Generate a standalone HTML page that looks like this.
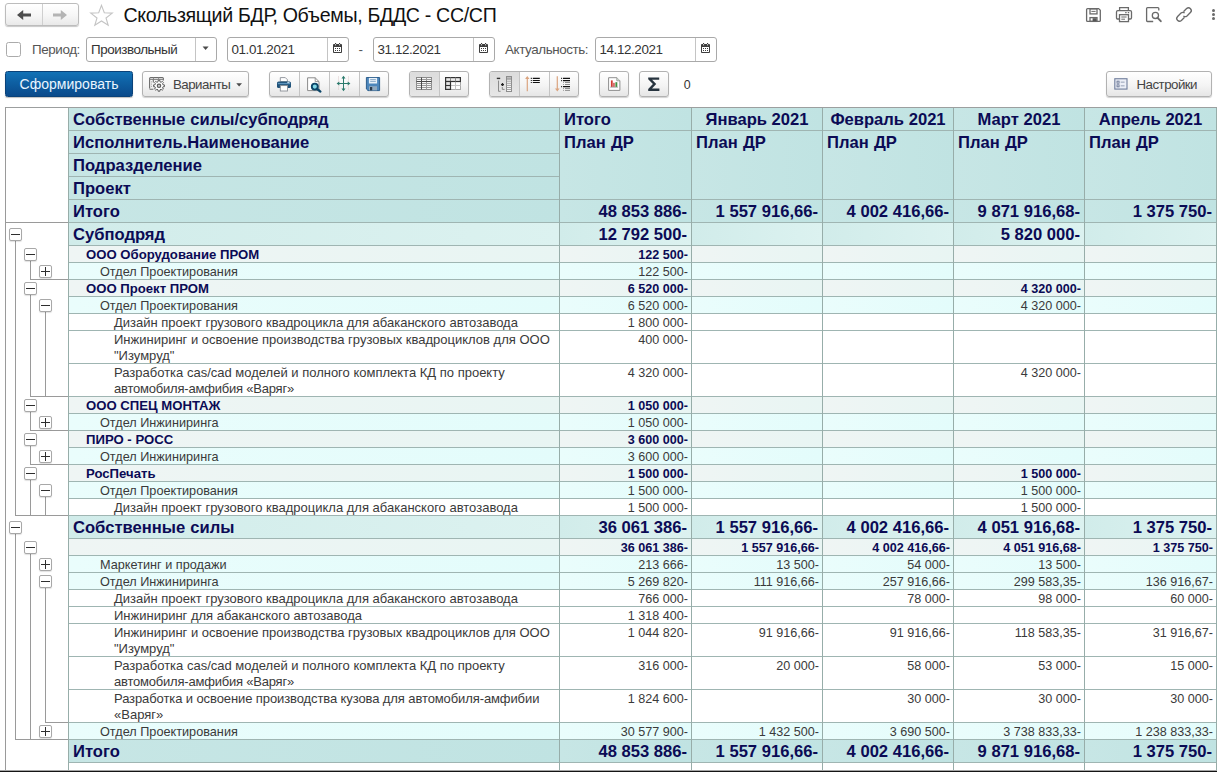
<!DOCTYPE html>
<html><head><meta charset="utf-8"><title>report</title>
<style>
html,body{margin:0;padding:0;background:#fff;}
body{width:1217px;height:772px;position:relative;overflow:hidden;font-family:"Liberation Sans",sans-serif;color:#333;}
.abs{position:absolute;}
.cell{position:absolute;box-sizing:border-box;overflow:hidden;white-space:nowrap;}
.big{font-size:16.6px;font-weight:700;color:#0b0b55;line-height:24px;word-spacing:.6px;}
.sm{font-size:13px;line-height:16px;color:#3a3a3a;padding-top:1px;}
.l3{font-size:12.7px;}
.smb{font-size:13.15px;line-height:16px;font-weight:700;color:#0b0b55;padding-top:1px;}
.num{text-align:right;padding-right:3px;}
.sm.num,.smb.num{font-size:12.6px;}
.big.num{word-spacing:0;padding-right:4px;}
.hd{word-spacing:0;}
.hl{position:absolute;height:1px;background:#9fb5b2;}
.vl{position:absolute;width:1px;background:#97ada9;}
.tl{position:absolute;background:#9a9a9a;}
.tb{position:absolute;width:11px;height:11px;border:1px solid #a8a8a8;border-radius:2px;background:#fff;box-shadow:0 1px 1px rgba(0,0,0,.12);box-sizing:content-box;}
.tb i{position:absolute;left:1px;top:5px;width:9px;height:1px;background:#2e2e2e;}
.tb b{position:absolute;left:5px;top:1px;width:1px;height:9px;background:#2e2e2e;}
.fld{position:absolute;box-sizing:border-box;height:25px;top:37px;border:1px solid #a9a9a9;border-radius:3px;background:#fff;font-size:13.4px;letter-spacing:-.44px;line-height:23px;color:#333;}
.fld .dv{position:absolute;top:0;bottom:0;width:1px;background:#c4c4c4;}
.lbl{position:absolute;font-size:13.4px;letter-spacing:-.4px;line-height:23px;top:38px;color:#555;white-space:nowrap;}
.btn{position:absolute;box-sizing:border-box;top:71px;height:26px;border:1px solid #b2b2b2;border-radius:3px;background:linear-gradient(#ffffff,#f4f4f4 55%,#e6e6e6);box-shadow:0 1px 1px rgba(0,0,0,.18);font-size:13.3px;letter-spacing:-.52px;color:#444;}
.btn .dv{position:absolute;top:0;bottom:0;width:1px;background:#c4c4c4;}
.btn .pr{position:absolute;top:0;bottom:0;background:linear-gradient(#dcdcdc,#e6e6e6);}
svg{position:absolute;overflow:visible;}
.btn svg{margin-left:-1px;}
.btn span{margin-top:1px;}
</style></head><body>

<!-- ===== title bar ===== -->
<div class="abs" style="left:5px;top:3px;width:74px;height:23px;box-sizing:border-box;border:1px solid #bcbcbc;border-radius:3px;background:linear-gradient(#fff,#f6f6f6 55%,#e9e9e9);box-shadow:0 1px 1px rgba(0,0,0,.22)"></div>
<div class="abs" style="left:42px;top:4px;width:1px;height:21px;background:#cfcfcf"></div>
<svg style="left:16px;top:9px" width="16" height="12" viewBox="0 0 16 12"><path d="M1 6 L7.2 1 L7.2 4.4 L15 4.4 L15 7.6 L7.2 7.6 L7.2 11 Z" fill="#4d4d4d"/></svg>
<svg style="left:52px;top:9px" width="16" height="12" viewBox="0 0 16 12"><path d="M15 6 L8.8 1 L8.8 4.4 L1 4.4 L1 7.6 L8.8 7.6 L8.8 11 Z" fill="#b4b4b4"/></svg>
<svg style="left:89px;top:4px" width="25" height="23" viewBox="0 0 25 23"><path d="M12.5 1.4 L15.3 8.8 L23.3 9.1 L17 14 L19.2 21.3 L12.5 17 L5.8 21.3 L8 14 L1.7 9.1 L9.7 8.8 Z" fill="#fff" stroke="#c4c4c4" stroke-width="1.1" stroke-linejoin="miter"/></svg>
<div class="abs" style="left:123.5px;top:2px;font-size:19.6px;letter-spacing:-.33px;line-height:27px;color:#111;white-space:nowrap">Скользящий БДР, Объемы, БДДС - СС/СП</div>

<!-- top-right icons -->
<svg style="left:1085px;top:7px" width="17" height="16" viewBox="0 0 17 16" fill="none" stroke="#6a6a6a" stroke-width="1.3">
 <path d="M2.6 1.6 H13.6 L15.3 3.3 V13.4 Q15.3 14.4 14.3 14.4 H2.6 Q1.6 14.4 1.6 13.4 V2.6 Q1.6 1.6 2.6 1.6 Z"/>
 <rect x="5" y="1.9" width="7" height="5"/><path d="M6.4 4.4 H10.6" stroke-width="1"/>
 <rect x="5" y="10.6" width="7" height="3.8"/><rect x="7.6" y="11.2" width="4" height="3" fill="#555" stroke="none"/>
</svg>
<svg style="left:1115px;top:6px" width="18" height="17" viewBox="0 0 18 17" fill="none" stroke="#6a6a6a" stroke-width="1.3">
 <path d="M4.6 4.6 V1.7 H13.4 V4.6"/>
 <path d="M4.4 13 H2.8 Q1.5 13 1.5 11.7 V6 Q1.5 4.7 2.8 4.7 H15.2 Q16.5 4.7 16.5 6 V11.7 Q16.5 13 15.2 13 H13.6"/>
 <rect x="4.5" y="8.7" width="9" height="6.9"/>
 <path d="M6.3 11 H11.6 M6.3 13.2 H10" stroke-width="1"/>
 <path d="M10.2 6.6 H11.6 M12.8 6.6 H14.2" stroke-width="1.1"/>
</svg>
<svg style="left:1145px;top:6px" width="18" height="17" viewBox="0 0 18 17" fill="none" stroke="#6a6a6a" stroke-width="1.3">
 <path d="M13.8 4.6 V2.6 Q13.8 1.7 12.9 1.7 H2.5 Q1.6 1.7 1.6 2.6 V14.6 Q1.6 15.5 2.5 15.5 H8.2"/>
 <circle cx="10.4" cy="9.4" r="3.1"/>
 <path d="M12.6 11.8 L15.8 15.2" stroke-width="1.9" stroke-linecap="round"/>
</svg>
<svg style="left:1175px;top:6px" width="18" height="17" viewBox="0 0 18 17" fill="none" stroke="#6a6a6a" stroke-width="1.35" stroke-linecap="round">
 <path d="M8.9 5.2 L11.6 2.6 Q13.6 0.8 15.5 2.7 Q17.3 4.7 15.4 6.6 L12 9.9 Q10.4 11.2 8.9 10.3"/>
 <path d="M9.1 11.8 L6.4 14.4 Q4.4 16.2 2.5 14.3 Q0.7 12.3 2.6 10.4 L6 7.1 Q7.6 5.8 9.1 6.7"/>
</svg>
<div class="abs" style="left:1212px;top:9.4px;width:3px;height:3px;border-radius:50%;background:#6a6a6a"></div>
<div class="abs" style="left:1212px;top:13.2px;width:3px;height:3px;border-radius:50%;background:#6a6a6a"></div>
<div class="abs" style="left:1212px;top:17px;width:3px;height:3px;border-radius:50%;background:#6a6a6a"></div>

<!-- ===== row 2: fields ===== -->
<div class="abs" style="left:6px;top:42px;width:15px;height:15px;box-sizing:border-box;border:1px solid #ababab;border-radius:2.5px;background:#fff"></div>
<div class="lbl" style="left:32px">Период:</div>
<div class="fld" style="left:86px;width:131px"><span style="position:absolute;left:4px">Произвольный</span><div class="dv" style="left:108px"></div>
 <svg style="left:115px;top:8px" width="8" height="5" viewBox="0 0 8 5"><path d="M0.6 0.6 H6.6 L3.6 4 Z" fill="#4a4a4a"/></svg></div>
<div class="fld" style="left:227px;width:122px"><span style="position:absolute;left:3.5px;letter-spacing:-.4px">01.01.2021</span><div class="dv" style="left:99px"></div><svg style="left:105px;top:5px" width="9" height="10" viewBox="0 0 9 10" shape-rendering="auto"><rect x="0" y="1" width="9" height="9" rx=".9" fill="#3e3e3e"/><rect x="1" y="4" width="7" height="5" fill="#fff"/><rect x="2" y="0" width="1.1" height="1.2" fill="#3e3e3e"/><rect x="6" y="0" width="1.1" height="1.2" fill="#3e3e3e"/><rect x="2" y="1.3" width="1.1" height="1" fill="#fff"/><rect x="6" y="1.3" width="1.1" height="1" fill="#fff"/><path d="M2 5.5 H3 M4 5.5 H5 M6 5.5 H7 M2 7.5 H3 M4 7.5 H5 M6 7.5 H7" stroke="#3e3e3e" stroke-width="1"/></svg></div>
<div class="lbl" style="left:358.5px">-</div>
<div class="fld" style="left:373px;width:122px"><span style="position:absolute;left:3.5px;letter-spacing:-.4px">31.12.2021</span><div class="dv" style="left:99px"></div><svg style="left:105px;top:5px" width="9" height="10" viewBox="0 0 9 10" shape-rendering="auto"><rect x="0" y="1" width="9" height="9" rx=".9" fill="#3e3e3e"/><rect x="1" y="4" width="7" height="5" fill="#fff"/><rect x="2" y="0" width="1.1" height="1.2" fill="#3e3e3e"/><rect x="6" y="0" width="1.1" height="1.2" fill="#3e3e3e"/><rect x="2" y="1.3" width="1.1" height="1" fill="#fff"/><rect x="6" y="1.3" width="1.1" height="1" fill="#fff"/><path d="M2 5.5 H3 M4 5.5 H5 M6 5.5 H7 M2 7.5 H3 M4 7.5 H5 M6 7.5 H7" stroke="#3e3e3e" stroke-width="1"/></svg></div>
<div class="lbl" style="left:505px">Актуальность:</div>
<div class="fld" style="left:595px;width:122px"><span style="position:absolute;left:3.5px;letter-spacing:-.4px">14.12.2021</span><div class="dv" style="left:99px"></div><svg style="left:105px;top:5px" width="9" height="10" viewBox="0 0 9 10" shape-rendering="auto"><rect x="0" y="1" width="9" height="9" rx=".9" fill="#3e3e3e"/><rect x="1" y="4" width="7" height="5" fill="#fff"/><rect x="2" y="0" width="1.1" height="1.2" fill="#3e3e3e"/><rect x="6" y="0" width="1.1" height="1.2" fill="#3e3e3e"/><rect x="2" y="1.3" width="1.1" height="1" fill="#fff"/><rect x="6" y="1.3" width="1.1" height="1" fill="#fff"/><path d="M2 5.5 H3 M4 5.5 H5 M6 5.5 H7 M2 7.5 H3 M4 7.5 H5 M6 7.5 H7" stroke="#3e3e3e" stroke-width="1"/></svg></div>

<!-- ===== row 3: command bar ===== -->
<div class="abs" style="left:5px;top:71px;width:128px;height:26px;box-sizing:border-box;border:1px solid #0a4279;border-radius:2.5px;background:linear-gradient(#1272b6,#0e5fa2 45%,#0a4a8b);box-shadow:0 1px 1px rgba(0,0,0,.25);color:#eaf5ff;font-size:14px;line-height:24px;text-align:center;white-space:nowrap;letter-spacing:.02px">Сформировать</div>

<div class="btn" style="left:142px;width:107px"><span style="position:absolute;left:30px;top:0;line-height:23px;white-space:nowrap">Варианты</span>
 <svg style="left:94px;top:11px" width="7" height="4" viewBox="0 0 7 4"><path d="M0.3 0.3 H6 L3.15 3.6 Z" fill="#4a4a4a"/></svg>
 <svg style="left:7px;top:5px" width="16" height="15" viewBox="0 0 16 15" fill="none">
  <path d="M0.6 11.6 V1.6 Q0.6 0.6 1.6 0.6 H13.4 Q14.4 0.6 14.4 1.6 V3.4" stroke="#6b6b6b" stroke-width="1.1"/>
  <path d="M0.6 2.5 H14.4 M4.5 .6 V2.5 M9.6 .6 V2.5" stroke="#8a8a8a" stroke-width="1"/>
  <path d="M0.6 12.2 H4.4 M4.3 2.5 V5.6" stroke="#6b6b6b" stroke-width="1.1"/>
  <path d="M2.5 4.4 V11" stroke="#a0a0a0" stroke-width="1" stroke-dasharray="1 1.2"/>
  <path d="M9.01 4.82 L9.10 3.37 L10.90 3.37 L10.99 4.82 L12.11 5.29 L13.20 4.33 L14.47 5.60 L13.51 6.69 L13.98 7.81 L15.43 7.90 L15.43 9.70 L13.98 9.79 L13.51 10.91 L14.47 12.00 L13.20 13.27 L12.11 12.31 L10.99 12.78 L10.90 14.23 L9.10 14.23 L9.01 12.78 L7.89 12.31 L6.80 13.27 L5.53 12.00 L6.49 10.91 L6.02 9.79 L4.57 9.70 L4.57 7.90 L6.02 7.81 L6.49 6.69 L5.53 5.60 L6.80 4.33 L7.89 5.29 Z" fill="#fff" stroke="#5e5e5e" stroke-width="1" stroke-linejoin="round"/>
  <circle cx="10" cy="8.8" r="1.7" fill="#cfcfcf" stroke="#5e5e5e" stroke-width="1.2"/>
 </svg>
</div>

<!-- group 1 -->
<div class="btn" style="left:269px;width:120px">
 <div class="dv" style="left:29px"></div><div class="dv" style="left:59px"></div><div class="dv" style="left:89px"></div>
 <!-- printer -->
 <svg style="left:7px;top:4px" width="16" height="16" viewBox="0 0 16 16">
  <path d="M4.3 5.6 V1.6 H9.3 L11.4 3.7 V5.6 Z" fill="#fff" stroke="#8a8f96" stroke-width=".9"/>
  <rect x="1" y="5.4" width="14" height="6.6" rx="1.6" fill="#1f5279"/>
  <rect x="1.8" y="6.9" width="12.4" height="1.3" fill="#5e94bd"/>
  <rect x="11.3" y="6.1" width="2.2" height="1" fill="#cfe4f2"/>
  <rect x="4.3" y="9.6" width="7.2" height="5.4" fill="#fff" stroke="#8a8f96" stroke-width=".9"/>
 </svg>
 <!-- preview -->
 <svg style="left:37px;top:4px" width="18" height="17" viewBox="0 0 18 17">
  <path d="M1.6 1.8 H9.2 L13 5.6 V14.6 H1.6 Z" fill="#fff" stroke="#8b8b8b" stroke-width="1"/>
  <path d="M9.2 1.8 V5.6 H13" fill="none" stroke="#8b8b8b" stroke-width=".9"/>
  <circle cx="8.8" cy="10.6" r="3" fill="#7fd7e6" stroke="#0c4669" stroke-width="1.9"/>
  <path d="M11.2 13 L14.4 15.6" stroke="#0c4669" stroke-width="2.3" stroke-linecap="round"/>
 </svg>
 <!-- move -->
 <svg style="left:66px;top:3px" width="18" height="18" viewBox="0 0 18 18" fill="none">
  <path d="M3.5 1.5 V15.5 M13.5 1.5 V15.5" stroke="#dccaca" stroke-width="1" stroke-dasharray="1 1"/>
  <path d="M8.5 2.5 V14.5 M3 8.5 H14" stroke="#2b7a6c" stroke-width="1"/>
  <path d="M8.5 .8 L10.5 3.5 H6.5 Z M8.5 16.2 L10.5 13.5 H6.5 Z M1.6 8.5 L4.3 6.5 V10.5 Z M15.4 8.5 L12.7 6.5 V10.5 Z" fill="#2b7a6c"/>
 </svg>
 <!-- save -->
 <svg style="left:96px;top:4px" width="16" height="16" viewBox="0 0 16 16">
  <path d="M1.4 1.5 H14.6 V14.6 H3 L1.4 13 Z" fill="#4c86bb" stroke="#2d5f8e" stroke-width="1"/>
  <rect x="3.9" y="1.9" width="8.2" height="5.6" fill="#eaf2f9"/>
  <path d="M5.2 3.6 H10.8 M5.2 5.4 H10.8" stroke="#7ea2c3" stroke-width=".9"/>
  <rect x="4" y="10.2" width="8" height="4.2" fill="#8fa9bf"/>
  <rect x="5" y="11" width="2.2" height="3.4" fill="#2a3a4c"/>
 </svg>
</div>

<!-- group 2 -->
<div class="btn" style="left:409px;width:60px">
 <div class="pr" style="left:0;width:30px;border-radius:2px 0 0 2px"></div>
 <div class="dv" style="left:29px"></div>
 <svg style="left:7px;top:5px" width="16" height="13" viewBox="0 0 16 13" fill="none">
  <rect x=".5" y=".5" width="15" height="12" fill="#f6f6f6" stroke="#8a8a8a"/>
  <path d="M.5 2.5 H15.5 M.5 6.5 H15.5 M.5 8.5 H15.5 M.5 10.5 H15.5 M10.5 .5 V12.5" stroke="#9a9a9a"/>
  <path d="M.5 4.5 H15.5 M5.5 .5 V12.5" stroke="#4a4a4a"/>
 </svg>
 <svg style="left:36px;top:5px" width="16" height="13" viewBox="0 0 16 13" fill="none">
  <rect x=".5" y=".5" width="15" height="12" fill="#fff" stroke="#a8a8a8"/>
  <path d="M10.5 4.5 V12.5 M5.5 8.5 H15.5" stroke="#c2c2c2"/>
  <rect x=".6" y=".6" width="14.8" height="3.9" fill="#ececec" stroke="#333" stroke-width="1.2"/>
  <path d="M5.5 .6 V4.5 M10.5 .6 V4.5" stroke="#8a8a8a"/>
  <rect x=".6" y="4.5" width="4.9" height="7.9" fill="#e4e4e4" stroke="#333" stroke-width="1.2"/>
  <path d="M.6 8.5 H5.5" stroke="#333" stroke-width="1.1"/>
 </svg>
</div>

<!-- group 3 -->
<div class="btn" style="left:489px;width:90px">
 <div class="pr" style="left:0;width:30px;border-radius:2px 0 0 2px"></div>
 <div class="dv" style="left:29px"></div><div class="dv" style="left:59px"></div>
 <svg style="left:6px;top:3px" width="18" height="18" viewBox="0 0 18 18" fill="none">
  <path d="M1.8 3.4 H5.2" stroke="#333" stroke-width="1.4"/>
  <path d="M3.5 5.6 V16.3 H5.6" stroke="#8a8a8a" stroke-width="1"/>
  <path d="M6 9.6 H9 M7.5 8.1 V11.1" stroke="#222" stroke-width="1.3"/>
  <path d="M7.3 12 V14.4 H9.6" stroke="#8a8a8a" stroke-width="1"/>
  <rect x="11.5" y="1.5" width="5" height="15" fill="#f4f4f4" stroke="#8d8d8d" stroke-width="1"/>
  <rect x="11.5" y="1.5" width="5" height="2.6" fill="#bdbdbd" stroke="#8d8d8d" stroke-width="1"/>
  <path d="M11.5 6.2 H16.5 M11.5 8.3 H16.5 M11.5 10.4 H16.5 M11.5 12.5 H16.5 M11.5 14.5 H16.5" stroke="#9b9b9b" stroke-width=".9"/>
 </svg>
 <svg style="left:35px;top:3px" width="20" height="18" viewBox="0 0 20 18" fill="none">
  <path d="M3.3 2 V16.2" stroke="#dba47f" stroke-width="1.2"/><path d="M3.3 1 L5.5 4 H1.1 Z" fill="#dba47f"/>
  <path d="M8.8 3.4 H15.8 M8.8 5.5 H15.8 M8.8 7.5 H15.8" stroke="#111" stroke-width="1.15"/>
  <path d="M6.8 3.4 H7.8 M6.8 5.5 H7.8 M6.8 7.5 H7.8" stroke="#111" stroke-width="1.15"/>
 </svg>
 <svg style="left:64px;top:3px" width="22" height="18" viewBox="0 0 22 18" fill="none">
  <path d="M4.3 1.2 V15" stroke="#dba47f" stroke-width="1.2"/><path d="M4.3 16.6 L6.6 13.4 H2 Z" fill="#dba47f"/>
  <path d="M10 3.4 H17 M10 5.5 H17 M10 11.5 H17" stroke="#111" stroke-width="1.25"/>
  <path d="M8.2 3.4 H9.1 M8.2 5.5 H9.1 M8.2 11.5 H9.1" stroke="#111" stroke-width="1.25"/>
  <path d="M12 7.5 H17 M12 9.5 H17 M12 13.5 H17 M12 15.4 H17" stroke="#8e8e8e" stroke-width="1"/>
  <path d="M10.2 7.5 H11 M10.2 9.5 H11 M10.2 13.5 H11 M10.2 15.4 H11" stroke="#8e8e8e" stroke-width="1"/>
 </svg>
</div>

<!-- chart -->
<div class="btn" style="left:599px;width:30px">
 <svg style="left:8px;top:4px" width="15" height="16" viewBox="0 0 15 16">
  <path d="M1.6 1.7 H9.8 L12.9 4.8 V14.4 H1.6 Z" fill="#fff" stroke="#8e8e8e" stroke-width="1"/>
  <path d="M9.8 1.7 V4.8 H12.9" fill="#d8e4d8" stroke="#8e8e8e" stroke-width=".8"/>
  <rect x="3.9" y="4.4" width="1.8" height="6.6" fill="#d23a33"/>
  <rect x="6.2" y="6.8" width="1.5" height="4.2" fill="#c9504a"/>
  <rect x="8.4" y="6.2" width="1.9" height="4.8" fill="#3f8f3f"/>
  <path d="M3.2 11.2 H11" stroke="#9c9c9c" stroke-width=".8"/>
 </svg>
</div>
<!-- sigma -->
<div class="btn" style="left:639px;width:30px">
 <svg style="left:8px;top:4px" width="14" height="16" viewBox="0 0 14 16"><path d="M1.2 1.4 H12.2 V3.7 H5.1 L9.2 7.9 L5 12.5 H12.4 V14.9 H1.2 V13.1 L5.9 7.9 L1.2 3.2 Z" fill="#27343f"/></svg>
</div>
<div class="abs" style="left:683.7px;top:73px;font-size:12.4px;line-height:25px;color:#333">0</div>

<!-- settings -->
<div class="btn" style="left:1106px;width:106px"><span style="position:absolute;left:29.5px;top:0;line-height:23px;white-space:nowrap">Настройки</span>
 <svg style="left:8px;top:6px" width="14" height="12" viewBox="0 0 15 13" fill="none">
  <rect x=".8" y=".8" width="13.2" height="11.2" fill="#eceff7" stroke="#6f7d9c" stroke-width="1.2"/>
  <rect x="3.2" y="3.4" width="2.2" height="2.2" fill="#fff" stroke="#5d6b8c" stroke-width=".9"/>
  <rect x="3.2" y="7.4" width="2.2" height="2.2" fill="#fff" stroke="#5d6b8c" stroke-width=".9"/>
  <path d="M7.2 4.5 H11.4 M7.2 8.5 H11.4" stroke="#8f9ab2" stroke-width="1"/>
 </svg>
</div>

<div class="cell big" style="left:69px;top:108px;width:490px;height:22px;background:linear-gradient(90deg,#c7e6e5,#c0e3e2);padding-left:4px">Собственные силы/субподряд</div>
<div class="cell big" style="left:69px;top:131px;width:490px;height:22px;background:linear-gradient(90deg,#c7e6e5,#c0e3e2);padding-left:4px">Исполнитель.Наименование</div>
<div class="cell big" style="left:69px;top:154px;width:490px;height:22px;background:linear-gradient(90deg,#c7e6e5,#c0e3e2);padding-left:4px">Подразделение</div>
<div class="cell big" style="left:69px;top:177px;width:490px;height:22px;background:linear-gradient(90deg,#c7e6e5,#c0e3e2);padding-left:4px">Проект</div>
<div class="cell big" style="left:69px;top:200px;width:490px;height:22px;background:linear-gradient(90deg,#c7e6e5,#c0e3e2);padding-left:4px">Итого</div>
<div class="cell big num" style="left:560px;top:200px;width:131px;height:22px;background:linear-gradient(90deg,#c7e6e5,#c0e3e2)">48 853 886-</div>
<div class="cell big num" style="left:692px;top:200px;width:130px;height:22px;background:linear-gradient(90deg,#c7e6e5,#c0e3e2)">1 557 916,66-</div>
<div class="cell big num" style="left:823px;top:200px;width:130px;height:22px;background:linear-gradient(90deg,#c7e6e5,#c0e3e2)">4 002 416,66-</div>
<div class="cell big num" style="left:954px;top:200px;width:130px;height:22px;background:linear-gradient(90deg,#c7e6e5,#c0e3e2)">9 871 916,68-</div>
<div class="cell big num" style="left:1085px;top:200px;width:131px;height:22px;background:linear-gradient(90deg,#c7e6e5,#c0e3e2)">1 375 750-</div>
<div class="cell big" style="left:69px;top:223px;width:490px;height:22px;background:linear-gradient(90deg,#d1ecea,#dcf2f0);padding-left:4px">Субподряд</div>
<div class="cell big num" style="left:560px;top:223px;width:131px;height:22px;background:linear-gradient(90deg,#d1ecea,#dcf2f0)">12 792 500-</div>
<div class="cell big num" style="left:692px;top:223px;width:130px;height:22px;background:linear-gradient(90deg,#d1ecea,#dcf2f0)"></div>
<div class="cell big num" style="left:823px;top:223px;width:130px;height:22px;background:linear-gradient(90deg,#d1ecea,#dcf2f0)"></div>
<div class="cell big num" style="left:954px;top:223px;width:130px;height:22px;background:linear-gradient(90deg,#d1ecea,#dcf2f0)">5 820 000-</div>
<div class="cell big num" style="left:1085px;top:223px;width:131px;height:22px;background:linear-gradient(90deg,#d1ecea,#dcf2f0)"></div>
<div class="cell smb" style="left:69px;top:246px;width:490px;height:16px;background:linear-gradient(90deg,#eff5f4,#e8f5f3);padding-left:17px">ООО Оборудование ПРОМ</div>
<div class="cell smb num" style="left:560px;top:246px;width:131px;height:16px;background:linear-gradient(90deg,#eff5f4,#e8f5f3)">122 500-</div>
<div class="cell smb num" style="left:692px;top:246px;width:130px;height:16px;background:linear-gradient(90deg,#eff5f4,#e8f5f3)"></div>
<div class="cell smb num" style="left:823px;top:246px;width:130px;height:16px;background:linear-gradient(90deg,#eff5f4,#e8f5f3)"></div>
<div class="cell smb num" style="left:954px;top:246px;width:130px;height:16px;background:linear-gradient(90deg,#eff5f4,#e8f5f3)"></div>
<div class="cell smb num" style="left:1085px;top:246px;width:131px;height:16px;background:linear-gradient(90deg,#eff5f4,#e8f5f3)"></div>
<div class="cell sm l3" style="left:69px;top:263px;width:490px;height:16px;background:linear-gradient(90deg,#eafdfc,#e3fcfb);padding-left:31px">Отдел Проектирования</div>
<div class="cell sm l3 num" style="left:560px;top:263px;width:131px;height:16px;background:linear-gradient(90deg,#eafdfc,#e3fcfb)">122 500-</div>
<div class="cell sm l3 num" style="left:692px;top:263px;width:130px;height:16px;background:linear-gradient(90deg,#eafdfc,#e3fcfb)"></div>
<div class="cell sm l3 num" style="left:823px;top:263px;width:130px;height:16px;background:linear-gradient(90deg,#eafdfc,#e3fcfb)"></div>
<div class="cell sm l3 num" style="left:954px;top:263px;width:130px;height:16px;background:linear-gradient(90deg,#eafdfc,#e3fcfb)"></div>
<div class="cell sm l3 num" style="left:1085px;top:263px;width:131px;height:16px;background:linear-gradient(90deg,#eafdfc,#e3fcfb)"></div>
<div class="cell smb" style="left:69px;top:280px;width:490px;height:16px;background:linear-gradient(90deg,#eff5f4,#e8f5f3);padding-left:17px">ООО Проект ПРОМ</div>
<div class="cell smb num" style="left:560px;top:280px;width:131px;height:16px;background:linear-gradient(90deg,#eff5f4,#e8f5f3)">6 520 000-</div>
<div class="cell smb num" style="left:692px;top:280px;width:130px;height:16px;background:linear-gradient(90deg,#eff5f4,#e8f5f3)"></div>
<div class="cell smb num" style="left:823px;top:280px;width:130px;height:16px;background:linear-gradient(90deg,#eff5f4,#e8f5f3)"></div>
<div class="cell smb num" style="left:954px;top:280px;width:130px;height:16px;background:linear-gradient(90deg,#eff5f4,#e8f5f3)">4 320 000-</div>
<div class="cell smb num" style="left:1085px;top:280px;width:131px;height:16px;background:linear-gradient(90deg,#eff5f4,#e8f5f3)"></div>
<div class="cell sm l3" style="left:69px;top:297px;width:490px;height:16px;background:linear-gradient(90deg,#eafdfc,#e3fcfb);padding-left:31px">Отдел Проектирования</div>
<div class="cell sm l3 num" style="left:560px;top:297px;width:131px;height:16px;background:linear-gradient(90deg,#eafdfc,#e3fcfb)">6 520 000-</div>
<div class="cell sm l3 num" style="left:692px;top:297px;width:130px;height:16px;background:linear-gradient(90deg,#eafdfc,#e3fcfb)"></div>
<div class="cell sm l3 num" style="left:823px;top:297px;width:130px;height:16px;background:linear-gradient(90deg,#eafdfc,#e3fcfb)"></div>
<div class="cell sm l3 num" style="left:954px;top:297px;width:130px;height:16px;background:linear-gradient(90deg,#eafdfc,#e3fcfb)">4 320 000-</div>
<div class="cell sm l3 num" style="left:1085px;top:297px;width:131px;height:16px;background:linear-gradient(90deg,#eafdfc,#e3fcfb)"></div>
<div class="cell sm" style="left:69px;top:314px;width:490px;height:16px;background:#fff;padding-left:45px">Дизайн проект грузового квадроцикла для абаканского автозавода</div>
<div class="cell sm num" style="left:560px;top:314px;width:131px;height:16px;background:#fff">1 800 000-</div>
<div class="cell sm num" style="left:692px;top:314px;width:130px;height:16px;background:#fff"></div>
<div class="cell sm num" style="left:823px;top:314px;width:130px;height:16px;background:#fff"></div>
<div class="cell sm num" style="left:954px;top:314px;width:130px;height:16px;background:#fff"></div>
<div class="cell sm num" style="left:1085px;top:314px;width:131px;height:16px;background:#fff"></div>
<div class="cell sm" style="left:69px;top:331px;width:490px;height:32px;background:#fff;padding-left:45px">Инжиниринг и освоение производства грузовых квадроциклов для ООО<br>"Изумруд"</div>
<div class="cell sm num" style="left:560px;top:331px;width:131px;height:32px;background:#fff">400 000-</div>
<div class="cell sm num" style="left:692px;top:331px;width:130px;height:32px;background:#fff"></div>
<div class="cell sm num" style="left:823px;top:331px;width:130px;height:32px;background:#fff"></div>
<div class="cell sm num" style="left:954px;top:331px;width:130px;height:32px;background:#fff"></div>
<div class="cell sm num" style="left:1085px;top:331px;width:131px;height:32px;background:#fff"></div>
<div class="cell sm" style="left:69px;top:364px;width:490px;height:32px;background:#fff;padding-left:45px">Разработка cas/cad моделей и полного комплекта КД по проекту<br><span style="letter-spacing:-.21px">автомобиля-амфибия «Варяг»</span></div>
<div class="cell sm num" style="left:560px;top:364px;width:131px;height:32px;background:#fff">4 320 000-</div>
<div class="cell sm num" style="left:692px;top:364px;width:130px;height:32px;background:#fff"></div>
<div class="cell sm num" style="left:823px;top:364px;width:130px;height:32px;background:#fff"></div>
<div class="cell sm num" style="left:954px;top:364px;width:130px;height:32px;background:#fff">4 320 000-</div>
<div class="cell sm num" style="left:1085px;top:364px;width:131px;height:32px;background:#fff"></div>
<div class="cell smb" style="left:69px;top:397px;width:490px;height:16px;background:linear-gradient(90deg,#eff5f4,#e8f5f3);padding-left:17px">ООО СПЕЦ МОНТАЖ</div>
<div class="cell smb num" style="left:560px;top:397px;width:131px;height:16px;background:linear-gradient(90deg,#eff5f4,#e8f5f3)">1 050 000-</div>
<div class="cell smb num" style="left:692px;top:397px;width:130px;height:16px;background:linear-gradient(90deg,#eff5f4,#e8f5f3)"></div>
<div class="cell smb num" style="left:823px;top:397px;width:130px;height:16px;background:linear-gradient(90deg,#eff5f4,#e8f5f3)"></div>
<div class="cell smb num" style="left:954px;top:397px;width:130px;height:16px;background:linear-gradient(90deg,#eff5f4,#e8f5f3)"></div>
<div class="cell smb num" style="left:1085px;top:397px;width:131px;height:16px;background:linear-gradient(90deg,#eff5f4,#e8f5f3)"></div>
<div class="cell sm l3" style="left:69px;top:414px;width:490px;height:16px;background:linear-gradient(90deg,#eafdfc,#e3fcfb);padding-left:31px">Отдел Инжиниринга</div>
<div class="cell sm l3 num" style="left:560px;top:414px;width:131px;height:16px;background:linear-gradient(90deg,#eafdfc,#e3fcfb)">1 050 000-</div>
<div class="cell sm l3 num" style="left:692px;top:414px;width:130px;height:16px;background:linear-gradient(90deg,#eafdfc,#e3fcfb)"></div>
<div class="cell sm l3 num" style="left:823px;top:414px;width:130px;height:16px;background:linear-gradient(90deg,#eafdfc,#e3fcfb)"></div>
<div class="cell sm l3 num" style="left:954px;top:414px;width:130px;height:16px;background:linear-gradient(90deg,#eafdfc,#e3fcfb)"></div>
<div class="cell sm l3 num" style="left:1085px;top:414px;width:131px;height:16px;background:linear-gradient(90deg,#eafdfc,#e3fcfb)"></div>
<div class="cell smb" style="left:69px;top:431px;width:490px;height:16px;background:linear-gradient(90deg,#eff5f4,#e8f5f3);padding-left:17px">ПИРО - РОСС</div>
<div class="cell smb num" style="left:560px;top:431px;width:131px;height:16px;background:linear-gradient(90deg,#eff5f4,#e8f5f3)">3 600 000-</div>
<div class="cell smb num" style="left:692px;top:431px;width:130px;height:16px;background:linear-gradient(90deg,#eff5f4,#e8f5f3)"></div>
<div class="cell smb num" style="left:823px;top:431px;width:130px;height:16px;background:linear-gradient(90deg,#eff5f4,#e8f5f3)"></div>
<div class="cell smb num" style="left:954px;top:431px;width:130px;height:16px;background:linear-gradient(90deg,#eff5f4,#e8f5f3)"></div>
<div class="cell smb num" style="left:1085px;top:431px;width:131px;height:16px;background:linear-gradient(90deg,#eff5f4,#e8f5f3)"></div>
<div class="cell sm l3" style="left:69px;top:448px;width:490px;height:16px;background:linear-gradient(90deg,#eafdfc,#e3fcfb);padding-left:31px">Отдел Инжиниринга</div>
<div class="cell sm l3 num" style="left:560px;top:448px;width:131px;height:16px;background:linear-gradient(90deg,#eafdfc,#e3fcfb)">3 600 000-</div>
<div class="cell sm l3 num" style="left:692px;top:448px;width:130px;height:16px;background:linear-gradient(90deg,#eafdfc,#e3fcfb)"></div>
<div class="cell sm l3 num" style="left:823px;top:448px;width:130px;height:16px;background:linear-gradient(90deg,#eafdfc,#e3fcfb)"></div>
<div class="cell sm l3 num" style="left:954px;top:448px;width:130px;height:16px;background:linear-gradient(90deg,#eafdfc,#e3fcfb)"></div>
<div class="cell sm l3 num" style="left:1085px;top:448px;width:131px;height:16px;background:linear-gradient(90deg,#eafdfc,#e3fcfb)"></div>
<div class="cell smb" style="left:69px;top:465px;width:490px;height:16px;background:linear-gradient(90deg,#eff5f4,#e8f5f3);padding-left:17px">РосПечать</div>
<div class="cell smb num" style="left:560px;top:465px;width:131px;height:16px;background:linear-gradient(90deg,#eff5f4,#e8f5f3)">1 500 000-</div>
<div class="cell smb num" style="left:692px;top:465px;width:130px;height:16px;background:linear-gradient(90deg,#eff5f4,#e8f5f3)"></div>
<div class="cell smb num" style="left:823px;top:465px;width:130px;height:16px;background:linear-gradient(90deg,#eff5f4,#e8f5f3)"></div>
<div class="cell smb num" style="left:954px;top:465px;width:130px;height:16px;background:linear-gradient(90deg,#eff5f4,#e8f5f3)">1 500 000-</div>
<div class="cell smb num" style="left:1085px;top:465px;width:131px;height:16px;background:linear-gradient(90deg,#eff5f4,#e8f5f3)"></div>
<div class="cell sm l3" style="left:69px;top:482px;width:490px;height:16px;background:linear-gradient(90deg,#eafdfc,#e3fcfb);padding-left:31px">Отдел Проектирования</div>
<div class="cell sm l3 num" style="left:560px;top:482px;width:131px;height:16px;background:linear-gradient(90deg,#eafdfc,#e3fcfb)">1 500 000-</div>
<div class="cell sm l3 num" style="left:692px;top:482px;width:130px;height:16px;background:linear-gradient(90deg,#eafdfc,#e3fcfb)"></div>
<div class="cell sm l3 num" style="left:823px;top:482px;width:130px;height:16px;background:linear-gradient(90deg,#eafdfc,#e3fcfb)"></div>
<div class="cell sm l3 num" style="left:954px;top:482px;width:130px;height:16px;background:linear-gradient(90deg,#eafdfc,#e3fcfb)">1 500 000-</div>
<div class="cell sm l3 num" style="left:1085px;top:482px;width:131px;height:16px;background:linear-gradient(90deg,#eafdfc,#e3fcfb)"></div>
<div class="cell sm" style="left:69px;top:499px;width:490px;height:16px;background:#fff;padding-left:45px">Дизайн проект грузового квадроцикла для абаканского автозавода</div>
<div class="cell sm num" style="left:560px;top:499px;width:131px;height:16px;background:#fff">1 500 000-</div>
<div class="cell sm num" style="left:692px;top:499px;width:130px;height:16px;background:#fff"></div>
<div class="cell sm num" style="left:823px;top:499px;width:130px;height:16px;background:#fff"></div>
<div class="cell sm num" style="left:954px;top:499px;width:130px;height:16px;background:#fff">1 500 000-</div>
<div class="cell sm num" style="left:1085px;top:499px;width:131px;height:16px;background:#fff"></div>
<div class="cell big" style="left:69px;top:516px;width:490px;height:22px;background:linear-gradient(90deg,#d1ecea,#dcf2f0);padding-left:4px">Собственные силы</div>
<div class="cell big num" style="left:560px;top:516px;width:131px;height:22px;background:linear-gradient(90deg,#d1ecea,#dcf2f0)">36 061 386-</div>
<div class="cell big num" style="left:692px;top:516px;width:130px;height:22px;background:linear-gradient(90deg,#d1ecea,#dcf2f0)">1 557 916,66-</div>
<div class="cell big num" style="left:823px;top:516px;width:130px;height:22px;background:linear-gradient(90deg,#d1ecea,#dcf2f0)">4 002 416,66-</div>
<div class="cell big num" style="left:954px;top:516px;width:130px;height:22px;background:linear-gradient(90deg,#d1ecea,#dcf2f0)">4 051 916,68-</div>
<div class="cell big num" style="left:1085px;top:516px;width:131px;height:22px;background:linear-gradient(90deg,#d1ecea,#dcf2f0)">1 375 750-</div>
<div class="cell smb" style="left:69px;top:539px;width:490px;height:16px;background:linear-gradient(90deg,#eff5f4,#e8f5f3);padding-left:17px"></div>
<div class="cell smb num" style="left:560px;top:539px;width:131px;height:16px;background:linear-gradient(90deg,#eff5f4,#e8f5f3)">36 061 386-</div>
<div class="cell smb num" style="left:692px;top:539px;width:130px;height:16px;background:linear-gradient(90deg,#eff5f4,#e8f5f3)">1 557 916,66-</div>
<div class="cell smb num" style="left:823px;top:539px;width:130px;height:16px;background:linear-gradient(90deg,#eff5f4,#e8f5f3)">4 002 416,66-</div>
<div class="cell smb num" style="left:954px;top:539px;width:130px;height:16px;background:linear-gradient(90deg,#eff5f4,#e8f5f3)">4 051 916,68-</div>
<div class="cell smb num" style="left:1085px;top:539px;width:131px;height:16px;background:linear-gradient(90deg,#eff5f4,#e8f5f3)">1 375 750-</div>
<div class="cell sm l3" style="left:69px;top:556px;width:490px;height:16px;background:linear-gradient(90deg,#eafdfc,#e3fcfb);padding-left:31px">Маркетинг и продажи</div>
<div class="cell sm l3 num" style="left:560px;top:556px;width:131px;height:16px;background:linear-gradient(90deg,#eafdfc,#e3fcfb)">213 666-</div>
<div class="cell sm l3 num" style="left:692px;top:556px;width:130px;height:16px;background:linear-gradient(90deg,#eafdfc,#e3fcfb)">13 500-</div>
<div class="cell sm l3 num" style="left:823px;top:556px;width:130px;height:16px;background:linear-gradient(90deg,#eafdfc,#e3fcfb)">54 000-</div>
<div class="cell sm l3 num" style="left:954px;top:556px;width:130px;height:16px;background:linear-gradient(90deg,#eafdfc,#e3fcfb)">13 500-</div>
<div class="cell sm l3 num" style="left:1085px;top:556px;width:131px;height:16px;background:linear-gradient(90deg,#eafdfc,#e3fcfb)"></div>
<div class="cell sm l3" style="left:69px;top:573px;width:490px;height:16px;background:linear-gradient(90deg,#eafdfc,#e3fcfb);padding-left:31px">Отдел Инжиниринга</div>
<div class="cell sm l3 num" style="left:560px;top:573px;width:131px;height:16px;background:linear-gradient(90deg,#eafdfc,#e3fcfb)">5 269 820-</div>
<div class="cell sm l3 num" style="left:692px;top:573px;width:130px;height:16px;background:linear-gradient(90deg,#eafdfc,#e3fcfb)">111 916,66-</div>
<div class="cell sm l3 num" style="left:823px;top:573px;width:130px;height:16px;background:linear-gradient(90deg,#eafdfc,#e3fcfb)">257 916,66-</div>
<div class="cell sm l3 num" style="left:954px;top:573px;width:130px;height:16px;background:linear-gradient(90deg,#eafdfc,#e3fcfb)">299 583,35-</div>
<div class="cell sm l3 num" style="left:1085px;top:573px;width:131px;height:16px;background:linear-gradient(90deg,#eafdfc,#e3fcfb)">136 916,67-</div>
<div class="cell sm" style="left:69px;top:590px;width:490px;height:16px;background:#fff;padding-left:45px">Дизайн проект грузового квадроцикла для абаканского автозавода</div>
<div class="cell sm num" style="left:560px;top:590px;width:131px;height:16px;background:#fff">766 000-</div>
<div class="cell sm num" style="left:692px;top:590px;width:130px;height:16px;background:#fff"></div>
<div class="cell sm num" style="left:823px;top:590px;width:130px;height:16px;background:#fff">78 000-</div>
<div class="cell sm num" style="left:954px;top:590px;width:130px;height:16px;background:#fff">98 000-</div>
<div class="cell sm num" style="left:1085px;top:590px;width:131px;height:16px;background:#fff">60 000-</div>
<div class="cell sm" style="left:69px;top:607px;width:490px;height:16px;background:#fff;padding-left:45px">Инжиниринг для абаканского автозавода</div>
<div class="cell sm num" style="left:560px;top:607px;width:131px;height:16px;background:#fff">1 318 400-</div>
<div class="cell sm num" style="left:692px;top:607px;width:130px;height:16px;background:#fff"></div>
<div class="cell sm num" style="left:823px;top:607px;width:130px;height:16px;background:#fff"></div>
<div class="cell sm num" style="left:954px;top:607px;width:130px;height:16px;background:#fff"></div>
<div class="cell sm num" style="left:1085px;top:607px;width:131px;height:16px;background:#fff"></div>
<div class="cell sm" style="left:69px;top:624px;width:490px;height:32px;background:#fff;padding-left:45px">Инжиниринг и освоение производства грузовых квадроциклов для ООО<br>"Изумруд"</div>
<div class="cell sm num" style="left:560px;top:624px;width:131px;height:32px;background:#fff">1 044 820-</div>
<div class="cell sm num" style="left:692px;top:624px;width:130px;height:32px;background:#fff">91 916,66-</div>
<div class="cell sm num" style="left:823px;top:624px;width:130px;height:32px;background:#fff">91 916,66-</div>
<div class="cell sm num" style="left:954px;top:624px;width:130px;height:32px;background:#fff">118 583,35-</div>
<div class="cell sm num" style="left:1085px;top:624px;width:131px;height:32px;background:#fff">31 916,67-</div>
<div class="cell sm" style="left:69px;top:657px;width:490px;height:32px;background:#fff;padding-left:45px">Разработка cas/cad моделей и полного комплекта КД по проекту<br><span style="letter-spacing:-.21px">автомобиля-амфибия «Варяг»</span></div>
<div class="cell sm num" style="left:560px;top:657px;width:131px;height:32px;background:#fff">316 000-</div>
<div class="cell sm num" style="left:692px;top:657px;width:130px;height:32px;background:#fff">20 000-</div>
<div class="cell sm num" style="left:823px;top:657px;width:130px;height:32px;background:#fff">58 000-</div>
<div class="cell sm num" style="left:954px;top:657px;width:130px;height:32px;background:#fff">53 000-</div>
<div class="cell sm num" style="left:1085px;top:657px;width:131px;height:32px;background:#fff">15 000-</div>
<div class="cell sm" style="left:69px;top:690px;width:490px;height:32px;background:#fff;padding-left:45px"><span style="letter-spacing:-.1px">Разработка и освоение производства кузова для автомобиля-амфибии</span><br>«Варяг»</div>
<div class="cell sm num" style="left:560px;top:690px;width:131px;height:32px;background:#fff">1 824 600-</div>
<div class="cell sm num" style="left:692px;top:690px;width:130px;height:32px;background:#fff"></div>
<div class="cell sm num" style="left:823px;top:690px;width:130px;height:32px;background:#fff">30 000-</div>
<div class="cell sm num" style="left:954px;top:690px;width:130px;height:32px;background:#fff">30 000-</div>
<div class="cell sm num" style="left:1085px;top:690px;width:131px;height:32px;background:#fff">30 000-</div>
<div class="cell sm l3" style="left:69px;top:723px;width:490px;height:16px;background:linear-gradient(90deg,#eafdfc,#e3fcfb);padding-left:31px">Отдел Проектирования</div>
<div class="cell sm l3 num" style="left:560px;top:723px;width:131px;height:16px;background:linear-gradient(90deg,#eafdfc,#e3fcfb)">30 577 900-</div>
<div class="cell sm l3 num" style="left:692px;top:723px;width:130px;height:16px;background:linear-gradient(90deg,#eafdfc,#e3fcfb)">1 432 500-</div>
<div class="cell sm l3 num" style="left:823px;top:723px;width:130px;height:16px;background:linear-gradient(90deg,#eafdfc,#e3fcfb)">3 690 500-</div>
<div class="cell sm l3 num" style="left:954px;top:723px;width:130px;height:16px;background:linear-gradient(90deg,#eafdfc,#e3fcfb)">3 738 833,33-</div>
<div class="cell sm l3 num" style="left:1085px;top:723px;width:131px;height:16px;background:linear-gradient(90deg,#eafdfc,#e3fcfb)">1 238 833,33-</div>
<div class="cell big" style="left:69px;top:740px;width:490px;height:22px;background:linear-gradient(90deg,#c7e6e5,#c0e3e2);padding-left:4px">Итого</div>
<div class="cell big num" style="left:560px;top:740px;width:131px;height:22px;background:linear-gradient(90deg,#c7e6e5,#c0e3e2)">48 853 886-</div>
<div class="cell big num" style="left:692px;top:740px;width:130px;height:22px;background:linear-gradient(90deg,#c7e6e5,#c0e3e2)">1 557 916,66-</div>
<div class="cell big num" style="left:823px;top:740px;width:130px;height:22px;background:linear-gradient(90deg,#c7e6e5,#c0e3e2)">4 002 416,66-</div>
<div class="cell big num" style="left:954px;top:740px;width:130px;height:22px;background:linear-gradient(90deg,#c7e6e5,#c0e3e2)">9 871 916,68-</div>
<div class="cell big num" style="left:1085px;top:740px;width:131px;height:22px;background:linear-gradient(90deg,#c7e6e5,#c0e3e2)">1 375 750-</div>
<div class="cell sm" style="left:69px;top:763px;width:490px;height:16px;background:#fff;padding-left:45px"></div>
<div class="cell sm num" style="left:560px;top:763px;width:131px;height:16px;background:#fff"></div>
<div class="cell sm num" style="left:692px;top:763px;width:130px;height:16px;background:#fff"></div>
<div class="cell sm num" style="left:823px;top:763px;width:130px;height:16px;background:#fff"></div>
<div class="cell sm num" style="left:954px;top:763px;width:130px;height:16px;background:#fff"></div>
<div class="cell sm num" style="left:1085px;top:763px;width:131px;height:16px;background:#fff"></div>
<div class="cell big hd" style="left:560px;top:108px;width:131px;height:22px;background:linear-gradient(90deg,#c7e6e5,#c0e3e2);text-align:left;padding-left:4px">Итого</div>
<div class="cell big" style="left:560px;top:131px;width:131px;height:68px;background:linear-gradient(90deg,#c7e6e5,#c0e3e2);padding-left:4px">План ДР</div>
<div class="cell big hd" style="left:692px;top:108px;width:130px;height:22px;background:linear-gradient(90deg,#c7e6e5,#c0e3e2);text-align:center">Январь 2021</div>
<div class="cell big" style="left:692px;top:131px;width:130px;height:68px;background:linear-gradient(90deg,#c7e6e5,#c0e3e2);padding-left:4px">План ДР</div>
<div class="cell big hd" style="left:823px;top:108px;width:130px;height:22px;background:linear-gradient(90deg,#c7e6e5,#c0e3e2);text-align:center">Февраль 2021</div>
<div class="cell big" style="left:823px;top:131px;width:130px;height:68px;background:linear-gradient(90deg,#c7e6e5,#c0e3e2);padding-left:4px">План ДР</div>
<div class="cell big hd" style="left:954px;top:108px;width:130px;height:22px;background:linear-gradient(90deg,#c7e6e5,#c0e3e2);text-align:center">Март 2021</div>
<div class="cell big" style="left:954px;top:131px;width:130px;height:68px;background:linear-gradient(90deg,#c7e6e5,#c0e3e2);padding-left:4px">План ДР</div>
<div class="cell big hd" style="left:1085px;top:108px;width:131px;height:22px;background:linear-gradient(90deg,#c7e6e5,#c0e3e2);text-align:center">Апрель 2021</div>
<div class="cell big" style="left:1085px;top:131px;width:131px;height:68px;background:linear-gradient(90deg,#c7e6e5,#c0e3e2);padding-left:4px">План ДР</div>
<div class="hl" style="left:68px;top:130px;width:1149px"></div>
<div class="hl" style="left:68px;top:153px;width:491px"></div>
<div class="hl" style="left:68px;top:176px;width:491px"></div>
<div class="hl" style="left:68px;top:199px;width:1149px"></div>
<div class="hl" style="left:68px;top:222px;width:1149px"></div>
<div class="hl" style="left:68px;top:245px;width:1149px"></div>
<div class="hl" style="left:68px;top:262px;width:1149px"></div>
<div class="hl" style="left:68px;top:279px;width:1149px"></div>
<div class="hl" style="left:68px;top:296px;width:1149px"></div>
<div class="hl" style="left:68px;top:313px;width:1149px"></div>
<div class="hl" style="left:68px;top:330px;width:1149px"></div>
<div class="hl" style="left:68px;top:363px;width:1149px"></div>
<div class="hl" style="left:68px;top:396px;width:1149px"></div>
<div class="hl" style="left:68px;top:413px;width:1149px"></div>
<div class="hl" style="left:68px;top:430px;width:1149px"></div>
<div class="hl" style="left:68px;top:447px;width:1149px"></div>
<div class="hl" style="left:68px;top:464px;width:1149px"></div>
<div class="hl" style="left:68px;top:481px;width:1149px"></div>
<div class="hl" style="left:68px;top:498px;width:1149px"></div>
<div class="hl" style="left:68px;top:515px;width:1149px"></div>
<div class="hl" style="left:68px;top:538px;width:1149px"></div>
<div class="hl" style="left:68px;top:555px;width:1149px"></div>
<div class="hl" style="left:68px;top:572px;width:1149px"></div>
<div class="hl" style="left:68px;top:589px;width:1149px"></div>
<div class="hl" style="left:68px;top:606px;width:1149px"></div>
<div class="hl" style="left:68px;top:623px;width:1149px"></div>
<div class="hl" style="left:68px;top:656px;width:1149px"></div>
<div class="hl" style="left:68px;top:689px;width:1149px"></div>
<div class="hl" style="left:68px;top:722px;width:1149px"></div>
<div class="hl" style="left:68px;top:739px;width:1149px"></div>
<div class="hl" style="left:68px;top:762px;width:1149px"></div>
<div class="vl" style="left:68px;top:107px;height:665px"></div>
<div class="vl" style="left:559px;top:107px;height:665px"></div>
<div class="vl" style="left:691px;top:107px;height:665px"></div>
<div class="vl" style="left:822px;top:107px;height:665px"></div>
<div class="vl" style="left:953px;top:107px;height:665px"></div>
<div class="vl" style="left:1084px;top:107px;height:665px"></div>
<div class="vl" style="left:1216px;top:107px;height:665px"></div>
<div class="abs" style="left:5px;top:107px;width:1212px;height:1px;background:#9c9f9f"></div>
<div class="abs" style="left:5px;top:107px;width:1px;height:665px;background:#9a9a9a"></div>
<div class="abs" style="left:5px;top:222px;width:63px;height:1px;background:#9a9a9a"></div>
<div class="tl" style="left:15px;top:234px;width:1px;height:281px"></div>
<div class="tl" style="left:15px;top:515px;width:53px;height:1px"></div>
<div class="tl" style="left:30px;top:254px;width:1px;height:25px"></div>
<div class="tl" style="left:30px;top:279px;width:38px;height:1px"></div>
<div class="tl" style="left:30px;top:288px;width:1px;height:108px"></div>
<div class="tl" style="left:30px;top:396px;width:38px;height:1px"></div>
<div class="tl" style="left:45px;top:305px;width:1px;height:91px"></div>
<div class="tl" style="left:30px;top:405px;width:1px;height:25px"></div>
<div class="tl" style="left:30px;top:430px;width:38px;height:1px"></div>
<div class="tl" style="left:30px;top:439px;width:1px;height:25px"></div>
<div class="tl" style="left:30px;top:464px;width:38px;height:1px"></div>
<div class="tl" style="left:30px;top:473px;width:1px;height:42px"></div>
<div class="tl" style="left:45px;top:490px;width:1px;height:25px"></div>
<div class="tl" style="left:15px;top:527px;width:1px;height:212px"></div>
<div class="tl" style="left:15px;top:739px;width:53px;height:1px"></div>
<div class="tl" style="left:30px;top:547px;width:1px;height:192px"></div>
<div class="tl" style="left:45px;top:581px;width:1px;height:141px"></div>
<div class="tl" style="left:45px;top:722px;width:23px;height:1px"></div>
<div class="tb" style="left:9px;top:228px"><i></i></div>
<div class="tb" style="left:24px;top:248px"><i></i></div>
<div class="tb" style="left:39px;top:265px"><i></i><b></b></div>
<div class="tb" style="left:24px;top:282px"><i></i></div>
<div class="tb" style="left:39px;top:299px"><i></i></div>
<div class="tb" style="left:24px;top:399px"><i></i></div>
<div class="tb" style="left:39px;top:416px"><i></i><b></b></div>
<div class="tb" style="left:24px;top:433px"><i></i></div>
<div class="tb" style="left:39px;top:450px"><i></i><b></b></div>
<div class="tb" style="left:24px;top:467px"><i></i></div>
<div class="tb" style="left:39px;top:484px"><i></i></div>
<div class="tb" style="left:9px;top:521px"><i></i></div>
<div class="tb" style="left:24px;top:541px"><i></i></div>
<div class="tb" style="left:39px;top:558px"><i></i><b></b></div>
<div class="tb" style="left:39px;top:575px"><i></i></div>
<div class="tb" style="left:39px;top:725px"><i></i><b></b></div>
<div class="abs" style="left:0;top:770px;width:1217px;height:1px;background:#a4a4a4"></div>
<div class="abs" style="left:0;top:771px;width:1217px;height:1px;background:#141414"></div>
</body></html>
